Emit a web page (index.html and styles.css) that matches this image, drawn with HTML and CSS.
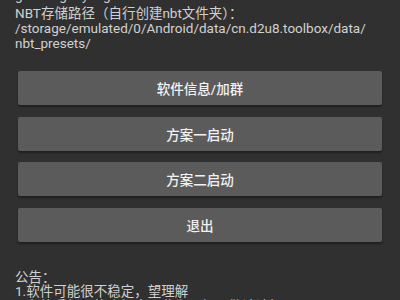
FILE: index.html
```html
<!DOCTYPE html>
<html lang="zh-CN">
<head>
<meta charset="utf-8">
<link rel="stylesheet" href="styles.css">
</head>
<body>
<div class="page">
  <div class="info">
    <p class="cut">github: gaoyang</p>
    <p>NBT存储路径（自行创建nbt文件夹）：</p>
    <p>/storage/emulated/0/Android/data/cn.d2u8.toolbox/data/ nbt_presets/</p>
  </div>
  <div class="buttons">
    <button class="btn">软件信息/加群</button>
    <button class="btn">方案一启动</button>
    <button class="btn">方案二启动</button>
    <button class="btn">退出</button>
  </div>
  <div class="notice">
    <p>公告：</p>
    <p>1.软件可能很不稳定，望理解</p>
    <p>2.有的手机可能会报毒，此为误报，敬请谅解</p>
  </div>
</div>
</body>
</html>
```
FILE: styles.css
```css
html, body {
  margin: 0;
  padding: 0;
  background: #303030;
  height: 100%;
  overflow: hidden;
}
.page {
  font-family: Roboto, "Noto Sans CJK SC", sans-serif;
  font-size: 13.5px;
  line-height: 14.7px;
  color: #d0d0d0;
  padding: 0 16px 0 15px;
}
p {
  margin: 0;
}
.info {
  margin-top: -12px;
}
.info .cut {
  margin-bottom: 3.5px;
}
.info p:last-child {
  width: 350px;
}
.buttons {
  display: flex;
  flex-direction: column;
  gap: 11.5px;
  margin: 20.7px 2px 0 3px;
}
.btn {
  height: 34px;
  border: none;
  border-radius: 2px;
  background: #5b5b5b;
  color: #f2f2f2;
  font-family: Roboto, "Noto Sans CJK SC", sans-serif;
  font-size: 13.5px;
  font-weight: 500;
  box-shadow: 0 2px 2px rgba(0, 0, 0, 0.35);
  padding: 0;
}
.notice {
  margin-top: 28px;
}
```
